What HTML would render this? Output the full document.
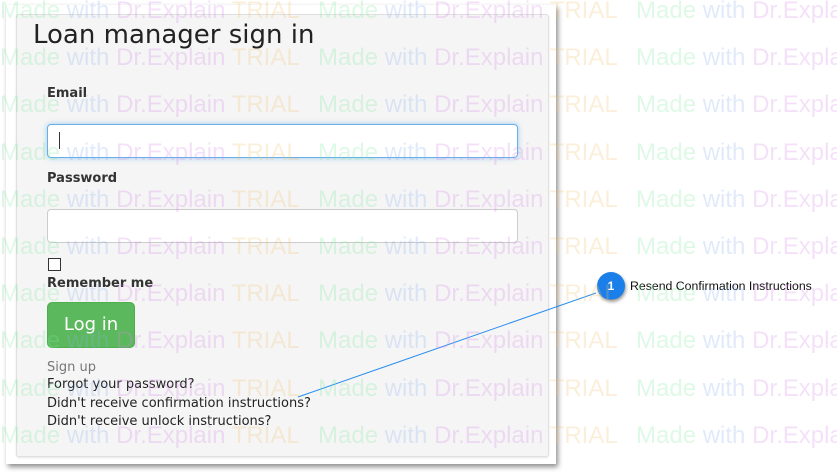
<!DOCTYPE html>
<html><head><meta charset="utf-8"><style>
body{margin:0;width:837px;height:472px;background:#fff;position:relative;overflow:hidden;font-family:"Liberation Sans","DejaVu Sans",sans-serif}
.frame{position:absolute;left:6px;top:5px;width:550px;height:459px;background:#fff;box-shadow:2px 3px 5px rgba(0,0,0,.45)}
.panel{position:absolute;left:16px;top:14px;width:531px;height:441px;background:#f5f5f5;border:1px solid #e0e0e0;border-radius:3px;box-shadow:0 1px 2px rgba(0,0,0,.1)}
.t{position:absolute;color:#333;white-space:nowrap}
.lbl{font-weight:bold;font-size:13px;font-family:"DejaVu Sans",sans-serif}
.inp{position:absolute;left:47px;width:469px;height:32px;background:#fff;border:1px solid #ccc;border-radius:4px}
.lnk{font-size:13px;font-family:"DejaVu Sans",sans-serif;color:#222}
.wm{position:absolute;font-size:24px;white-space:nowrap;opacity:.25;pointer-events:none}
.wm span:nth-child(1){color:#7ee89c}.wm span:nth-child(2){color:#88b0f0}.wm span:nth-child(3){color:#d48ae8}.wm span:nth-child(4){color:#f2c070}
</style></head><body>
<div class="frame"></div>
<div class="panel"></div>
<div class="t" style="left:33px;top:20px;font-size:26px;font-family:'DejaVu Sans',sans-serif;color:#222">Loan manager sign in</div>
<div class="t lbl" style="left:47px;top:86px">Email</div>
<div class="inp" style="top:124px;border-color:#66afe9;box-shadow:0 0 6px rgba(102,175,233,.6)"></div>
<div style="position:absolute;left:59px;top:132px;width:1px;height:17px;background:#333"></div>
<div class="t lbl" style="left:47px;top:171px">Password</div>
<div class="inp" style="top:209px"></div>
<div style="position:absolute;left:48px;top:258px;width:11px;height:11px;border:1px solid #333;background:#fff"></div>
<div class="t lbl" style="left:47px;top:276px">Remember me</div>
<div style="position:absolute;left:47px;top:302px;width:88px;height:46px;background:#5cb85c;border:1px solid #4cae4c;border-radius:5px;box-sizing:border-box;color:#fff;font-size:18px;font-family:'DejaVu Sans',sans-serif;line-height:44px;text-align:center">Log in</div>
<div class="t lnk" style="left:47px;top:360px;color:#777">Sign up</div>
<div class="t lnk" style="left:47px;top:377px">Forgot your password?</div>
<div class="t lnk" style="left:47px;top:396px">Didn't receive confirmation instructions?</div>
<div class="t lnk" style="left:47px;top:414px">Didn't receive unlock instructions?</div>
<svg style="position:absolute;left:0;top:0" width="837" height="472"><line x1="298" y1="397" x2="596" y2="293" stroke="#2a8ff0" stroke-width="1"/></svg>
<div style="position:absolute;left:597px;top:272px;width:28px;height:28px;border-radius:50%;background:#1a7fe8;box-shadow:1px 2px 3px rgba(0,0,0,.4);color:#fff;font-size:12px;font-weight:bold;text-align:center;line-height:28px">1</div>
<div class="t" style="left:630px;top:279px;font-size:12.3px;color:#111">Resend Confirmation Instructions</div>
<div id="w"></div>
<script>
var h='';for(var r=0;r<10;r++){for(var c=0;c<3;c++){h+='<div class="wm" style="left:'+(c*318)+'px;top:'+(r*47.2-3)+'px"><span>Made </span><span>with </span><span>Dr.Explain </span><span>TRIAL</span></div>';}}
document.getElementById('w').innerHTML=h;
</script>
</body></html>
